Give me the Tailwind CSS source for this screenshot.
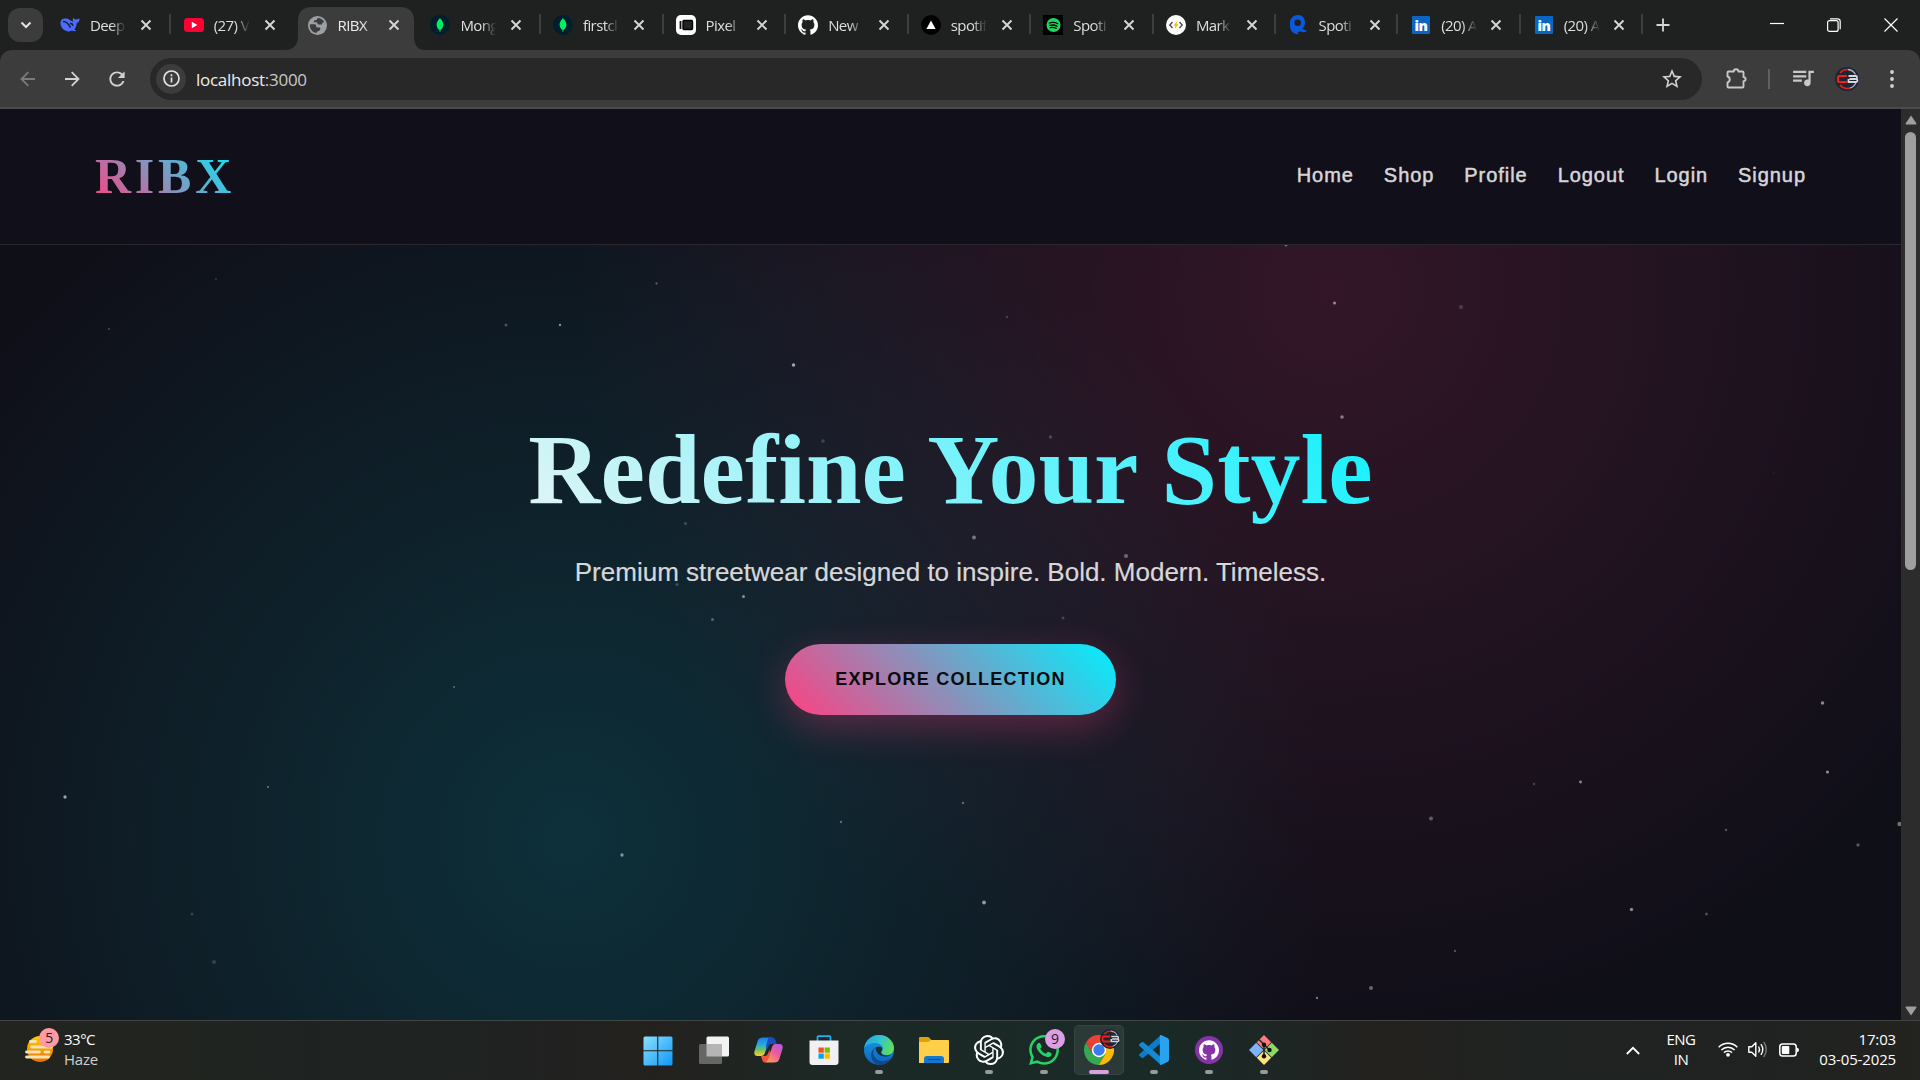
<!DOCTYPE html>
<html lang="en">
<head>
<meta charset="utf-8">
<title>RIBX</title>
<script src="https://cdn.jsdelivr.net/npm/@tailwindcss/browser@4"></script>
</head>
<body class="w-[1920px] h-[1080px] overflow-hidden flex flex-col bg-[#1f2121] font-['Open_Sans','Noto_Sans',sans-serif] text-[#dedede]">

<svg class="hidden">
  <symbol id="x" viewBox="0 0 12 12"><path d="M1.500 1.500l9 9M10.500 1.500l-9 9" stroke="#d6d6d6" stroke-width="1.900" fill="none"/></symbol>
  <symbol id="mongo" viewBox="0 0 20 20"><circle cx="10" cy="10" r="10" fill="#001e2b"/><path d="M10 3c.8 1.500 3.400 3.200 3.400 6.700 0 2.600-1.500 4.300-2.900 5.300l-.2 2h-.6l-.2-2C8.100 14 6.600 12.300 6.600 9.700 6.600 6.200 9.200 4.500 10 3z" fill="#00ed64"/></symbol>
  <symbol id="linkedin" viewBox="0 0 20 20"><rect x="1" y="1" width="18" height="18" rx="1" fill="#0a66c2"/><text x="3.400" y="15.500" font-family="Open Sans" font-weight="800" font-size="14" textLength="13" fill="#fff">in</text></symbol>
  <symbol id="github" viewBox="0 0 24 24"><path d="M12 .297c-6.630 0-12 5.373-12 12 0 5.303 3.438 9.800 8.205 11.385.6.113.82-.258.82-.577 0-.285-.01-1.040-.015-2.040-3.338.724-4.042-1.610-4.042-1.610C4.422 18.070 3.633 17.700 3.633 17.700c-1.087-.744.084-.729.084-.729 1.205.084 1.838 1.236 1.838 1.236 1.070 1.835 2.809 1.305 3.495.998.108-.776.417-1.305.76-1.605-2.665-.3-5.466-1.332-5.466-5.930 0-1.310.465-2.380 1.235-3.220-.135-.303-.54-1.523.105-3.176 0 0 1.005-.322 3.300 1.230.96-.267 1.980-.399 3-.405 1.020.006 2.040.138 3 .405 2.280-1.552 3.285-1.230 3.285-1.230.645 1.653.24 2.873.12 3.176.765.840 1.230 1.910 1.230 3.220 0 4.610-2.805 5.625-5.475 5.920.42.360.81 1.096.81 2.220 0 1.606-.015 2.896-.015 3.286 0 .315.21.690.825.570C20.565 22.092 24 17.592 24 12.297c0-6.627-5.373-12-12-12"/></symbol>
  <symbol id="cb" viewBox="0 0 24 24"><circle cx="12" cy="12" r="12" fill="#1c2536"/><path d="M16 3.500A9.500 9.500 0 0 0 5 6M5 18a9.500 9.500 0 0 0 10 3" stroke="#e02414" stroke-width="1.600" fill="none"/><path d="M13 2.500a9.500 9.500 0 0 1 7.500 5M21 15.500a9.500 9.500 0 0 1-6 5.600" stroke="#aab0b8" stroke-width="1.300" fill="none"/><path d="M12 9H4.500Q3 9 3 10.500v3Q3 15 4.500 15H12" stroke="#f0200f" stroke-width="2.200" fill="none"/><path d="M13.500 9H21q1 0 1 1.500t-1 1.500h-6.500M21 12q1.500 0 1.500 1.500T21 15h-7.500V12" stroke="#d5d8dc" stroke-width="1.800" fill="none"/></symbol>
</svg>

<!-- Tab strip -->
<div class="h-[50px] shrink-0 flex items-center bg-[#1f2121] text-[15px] tracking-[-0.6px]">
  <div class="ml-2 w-[35px] h-[34px] rounded-[12px] bg-[#3c3c3c] flex items-center justify-center"><svg class="w-3 h-2" viewBox="0 0 12 8"><path d="M1.500 1.500L6 6l4.500-4.500" stroke="#e3e3e3" stroke-width="2" fill="none"/></svg></div>
  <div class="ml-[5px] flex h-full">
    <div class="relative w-[123.800px] flex items-center pl-3"><svg class="w-5 h-5 shrink-0" viewBox="0 0 20 20"><path d="M.5 8C.5 4.500 3 3.300 5.500 3.500c2-.3 3.300.6 4.500 1.700 1.200.3 2.200 1.400 3.200 1.600-.6-1.300-.7-2.500.2-4.300.5 1.400 1.500 1.900 2.600 2 1.200-.7 2.300-.6 3.500-1.300.2 2.600-.8 4.300-2.800 4.900-.1 3-1.200 5-2.400 6.300l2 1.400c-1.300.8-3.100.5-4.200-.2-1.300.8-3.300 1.100-5 .6C3.100 15.200.5 12 .5 8z" fill="#4d6bfe"/><path d="M3 6.500c3.200-.2 6 3 7.500 6.300M10 8.500c1.600-.2 2.800.8 3 2.300" stroke="#1f2121" stroke-width="1.400" fill="none"/></svg><span class="ml-[10px] w-[36px] whitespace-nowrap [mask-image:linear-gradient(90deg,#000_60%,transparent)]">Deep</span><svg class="ml-[14px] w-3 h-3 shrink-0"><use href="#x"/></svg><i class="absolute right-px top-[14px] w-[2px] h-5 bg-[#3d3e3e]"></i></div>
    <div class="relative w-[122.800px] flex items-center pl-3"><svg class="w-5 h-5 shrink-0" viewBox="0 0 20 20"><rect x="0" y="3" width="20" height="14" rx="3.500" fill="#ff0033"/><path d="M7.800 6.800v6.400L13.300 10z" fill="#fff"/></svg><span class="ml-[10px] w-[36px] whitespace-nowrap [mask-image:linear-gradient(90deg,#000_60%,transparent)]">(27) V</span><svg class="ml-[14px] w-3 h-3 shrink-0"><use href="#x"/></svg></div>
    <div class="relative w-[123.800px] flex items-center pl-[13px]">
      <svg class="absolute left-[-11px] top-[7px] w-[141px] h-[43px]" viewBox="0 0 141 43"><path d="M0 43Q14 43 14 29V14Q14 0 28 0H116Q130 0 130 14V29Q130 43 141 43Z" fill="#3c3c3c"/></svg>
      <svg class="relative w-[19px] h-[19px] shrink-0" viewBox="2 2 20 20" fill="#9aa0a6"><circle cx="12" cy="12" r="10"/><path fill="#3c3c3c" d="M11 19.930c-3.950-.49-7-3.850-7-7.930 0-.4 0-.8.100-1.200h4.400c1.500 0 2 .6 2 1.700 0 1.200.7 1.500 2 1.500h1.500c.6 0 1 .6 1 1.200 0 1.500-1 2.800-2.500 2.800-1 0-1.500.8-1.500 1.930zM8 8.500c0-1.300 1-2.200 2.500-2.200.8 0 1-.6 1-1.200 0-.5.300-1 .8-1.100 3 .1 5.700 1.900 7 4.600-1.200-.2-2.300.2-2.300 1.200 0 .9-.7 1.200-1.500 1.200h-2c-1.200 0-1.500-.7-1.500-1.500 0-.6-.4-1-1-1z"/></svg><span class="relative ml-[11px] w-[35px] whitespace-nowrap text-[#ececec] [mask-image:linear-gradient(90deg,#000_75%,transparent)]">RIBX</span><svg class="relative ml-[15px] w-3 h-3 shrink-0"><use href="#x"/></svg></div>
    <div class="relative w-[122.600px] flex items-center pl-3"><svg class="w-5 h-5 shrink-0"><use href="#mongo"/></svg><span class="ml-[10px] w-[36px] whitespace-nowrap [mask-image:linear-gradient(90deg,#000_60%,transparent)]">Mong</span><svg class="ml-[14px] w-3 h-3 shrink-0"><use href="#x"/></svg><i class="absolute right-0 top-[14px] w-[2px] h-5 bg-[#3d3e3e]"></i></div>
    <div class="relative w-[122.600px] flex items-center pl-3"><svg class="w-5 h-5 shrink-0"><use href="#mongo"/></svg><span class="ml-[10px] w-[36px] whitespace-nowrap [mask-image:linear-gradient(90deg,#000_60%,transparent)]">firstcl</span><svg class="ml-[14px] w-3 h-3 shrink-0"><use href="#x"/></svg><i class="absolute right-0 top-[14px] w-[2px] h-5 bg-[#3d3e3e]"></i></div>
    <div class="relative w-[122.600px] flex items-center pl-3"><svg class="w-5 h-5 shrink-0" viewBox="0 0 20 20"><rect width="20" height="20" rx="5" fill="#fff"/><path d="M4.500 6v8" stroke="#111" stroke-width="1.800"/><rect x="7" y="5.500" width="9.500" height="9" rx="1" fill="#222" stroke="#000" stroke-width="1.400"/></svg><span class="ml-[10px] w-[36px] whitespace-nowrap [mask-image:linear-gradient(90deg,#000_60%,transparent)]">Pixel</span><svg class="ml-[14px] w-3 h-3 shrink-0"><use href="#x"/></svg><i class="absolute right-0 top-[14px] w-[2px] h-5 bg-[#3d3e3e]"></i></div>
    <div class="relative w-[122.600px] flex items-center pl-3"><svg class="w-5 h-5 shrink-0 fill-white"><use href="#github"/></svg><span class="ml-[10px] w-[36px] whitespace-nowrap [mask-image:linear-gradient(90deg,#000_60%,transparent)]">New</span><svg class="ml-[14px] w-3 h-3 shrink-0"><use href="#x"/></svg><i class="absolute right-0 top-[14px] w-[2px] h-5 bg-[#3d3e3e]"></i></div>
    <div class="relative w-[122.600px] flex items-center pl-3"><svg class="w-5 h-5 shrink-0" viewBox="0 0 20 20"><circle cx="10" cy="10" r="10" fill="#000"/><path d="M10 5.500l4.600 8.500H5.400z" fill="#fff"/></svg><span class="ml-[10px] w-[36px] whitespace-nowrap [mask-image:linear-gradient(90deg,#000_60%,transparent)]">spotif</span><svg class="ml-[14px] w-3 h-3 shrink-0"><use href="#x"/></svg><i class="absolute right-0 top-[14px] w-[2px] h-5 bg-[#3d3e3e]"></i></div>
    <div class="relative w-[122.600px] flex items-center pl-3"><svg class="w-5 h-5 shrink-0" viewBox="0 0 20 20"><rect width="20" height="20" fill="#000"/><circle cx="10.500" cy="10" r="7" fill="#1ed760"/><path d="M6.300 8q4.500-1.400 8.500.8M6.800 10.400q3.800-1.100 7.200.8M7.200 12.600q3.200-.8 6 .8" stroke="#000" stroke-width="1.300" fill="none" stroke-linecap="round"/></svg><span class="ml-[10px] w-[36px] whitespace-nowrap [mask-image:linear-gradient(90deg,#000_60%,transparent)]">Spoti</span><svg class="ml-[14px] w-3 h-3 shrink-0"><use href="#x"/></svg><i class="absolute right-0 top-[14px] w-[2px] h-5 bg-[#3d3e3e]"></i></div>
    <div class="relative w-[122.600px] flex items-center pl-3"><svg class="w-5 h-5 shrink-0" viewBox="0 0 20 20"><circle cx="10" cy="10" r="10" fill="#fff"/><path d="M6.500 7L3.800 10l2.700 3M13.500 7l2.700 3-2.700 3" stroke="#444" stroke-width="1.300" fill="none"/><path d="M11.300 6l-3.800 4.700h2L8.700 14l3.800-4.700h-2z" fill="#f7b500"/></svg><span class="ml-[10px] w-[36px] whitespace-nowrap [mask-image:linear-gradient(90deg,#000_60%,transparent)]">Mark</span><svg class="ml-[14px] w-3 h-3 shrink-0"><use href="#x"/></svg><i class="absolute right-px top-[14px] w-[2px] h-5 bg-[#3d3e3e]"></i></div>
    <div class="relative w-[122.600px] flex items-center pl-3"><svg class="w-5 h-5 shrink-0" viewBox="0 0 20 20"><path fill-rule="evenodd" d="M9 0c4.500 0 7 3.400 7 7.600 0 2.600-1 4.600-2.600 6 1.400 1.600 2.800 1.900 4.600 1.700-1 2-3 2.300-4.600 1.600-2-.8-3.400-.2-4.800 0 .3.900.7 1.600 1.200 2.300C4.800 19.500 1 16 1 11V8C1 3.400 4.500 0 9 0zm-.3 4.500a3.300 3.300 0 1 0 0 6.600 3.300 3.300 0 0 0 0-6.600z" fill="#0a57e0"/></svg><span class="ml-[10px] w-[36px] whitespace-nowrap [mask-image:linear-gradient(90deg,#000_60%,transparent)]">Spoti</span><svg class="ml-[14px] w-3 h-3 shrink-0"><use href="#x"/></svg><i class="absolute right-px top-[14px] w-[2px] h-5 bg-[#3d3e3e]"></i></div>
    <div class="relative w-[122.600px] flex items-center pl-3"><svg class="w-5 h-5 shrink-0"><use href="#linkedin"/></svg><span class="ml-[10px] w-[36px] whitespace-nowrap [mask-image:linear-gradient(90deg,#000_60%,transparent)]">(20) A</span><svg class="ml-[13px] w-3 h-3 shrink-0"><use href="#x"/></svg><i class="absolute right-px top-[14px] w-[2px] h-5 bg-[#3d3e3e]"></i></div>
    <div class="relative w-[122.600px] flex items-center pl-3"><svg class="w-5 h-5 shrink-0"><use href="#linkedin"/></svg><span class="ml-[10px] w-[36px] whitespace-nowrap [mask-image:linear-gradient(90deg,#000_60%,transparent)]">(20) A</span><svg class="ml-[13px] w-3 h-3 shrink-0"><use href="#x"/></svg><i class="absolute right-px top-[14px] w-[2px] h-5 bg-[#3d3e3e]"></i></div>
  </div>
  <svg class="ml-3 w-[14px] h-[14px]" viewBox="0 0 14 14"><path d="M7 .5v13M.5 7h13" stroke="#d6d6d6" stroke-width="1.800"/></svg>
  <div class="ml-auto mr-[22px] flex items-center gap-[43px]">
    <svg class="w-[14px] h-[14px]" viewBox="0 0 14 14"><path d="M0 5.500h14" stroke="#fff" stroke-width="1.200"/></svg>
    <svg class="w-[14px] h-[14px]" viewBox="0 0 14 14"><rect x=".6" y="2.600" width="10.500" height="10.800" rx="2" stroke="#fff" stroke-width="1.200" fill="none"/><path d="M3 .8h7.500q2.700 0 2.700 2.700v7.800" stroke="#fff" stroke-width="1.200" fill="none"/></svg>
    <svg class="w-[14px] h-[14px]" viewBox="0 0 14 14"><path d="M.5.5l13 13M13.500.5l-13 13" stroke="#fff" stroke-width="1.200"/></svg>
  </div>
</div>

<!-- Toolbar -->
<div class="h-[59px] shrink-0 flex items-center bg-[#3c3c3c] rounded-t-[12px] border-b-2 border-[#4a4b4a]">
  <svg class="ml-[20px] w-[15px] h-[16px]" viewBox="0 0 15 16"><path d="M15 8H1.500M8.300 1.200L1.500 8l6.800 6.800" stroke="#7b7b7b" stroke-width="1.800" fill="none"/></svg>
  <svg class="ml-[30px] w-[15px] h-[16px]" viewBox="0 0 15 16"><path d="M0 8h13.500M6.700 1.200L13.500 8l-6.800 6.800" stroke="#d2d2d2" stroke-width="1.800" fill="none"/></svg>
  <svg class="ml-[27px] w-[20px] h-[20px]" viewBox="1.500 2 21 20" fill="#d2d2d2"><path d="M17.650 6.350C16.200 4.900 14.210 4 12 4c-4.420 0-7.990 3.580-7.990 8s3.570 8 7.990 8c3.730 0 6.840-2.550 7.730-6h-2.080c-.82 2.330-3.040 4-5.650 4-3.310 0-6-2.690-6-6s2.690-6 6-6c1.660 0 3.140.69 4.220 1.780L13 11h7V4l-2.350 2.350z"/></svg>
  <div class="ml-[23px] w-[1552px] h-[42px] rounded-full bg-[#282828] flex items-center pl-[6px] pr-[19px]">
    <div class="w-[30px] h-[30px] rounded-full bg-[#3c3c3c] flex items-center justify-center"><svg class="w-[17px] h-[17px]" viewBox="0 0 17 17"><circle cx="8.500" cy="8.500" r="7.500" stroke="#e3e3e3" stroke-width="1.700" fill="none"/><path d="M8.500 7.500v5M8.500 4.300v1.900" stroke="#e3e3e3" stroke-width="1.700"/></svg></div>
    <span class="ml-[10px] pt-[2px] text-[17px] tracking-[-0.27px] text-[#ececec]">localhost<span class="text-[#c9c9c9]">:3000</span></span>
    <svg class="ml-auto w-[22px] h-[22px]" viewBox="1 1 22 22" fill="#d2d2d2"><path d="M22 9.240l-7.190-.62L12 2 9.190 8.630 2 9.240l5.460 4.730L5.820 21 12 17.270 18.180 21l-1.630-7.030L22 9.240zM12 15.400l-3.760 2.270 1-4.280-3.320-2.880 4.380-.38L12 6.100l1.710 4.040 4.380.38-3.320 2.880 1 4.280L12 15.400z"/></svg>
  </div>
  <svg class="ml-[23px] w-[23px] h-[23px]" viewBox="0 0 23 23"><path d="M3.500 4.500h5.300a2.300 2.300 0 0 1 4.600 0h4.100q1 0 1 1v4.600a2 2 0 0 1 0 4.200v5.200q0 1-1 1H3.500q-1 0-1-1v-4.200a3 3 0 0 0 0-5.800V5.500q0-1 1-1z" stroke="#c8c8c8" stroke-width="1.900" fill="none" stroke-linejoin="round"/></svg>
  <i class="ml-[20px] w-[2px] h-5 bg-[#606060]"></i>
  <svg class="ml-[22px] w-[23px] h-[23px]" viewBox="2 3 21 20" fill="#c8c8c8"><path d="M15 6H3v2h12V6zm0 4H3v2h12v-2zM3 16h8v-2H3v2zM17 6v8.180c-.31-.11-.65-.18-1-.18-1.660 0-3 1.340-3 3s1.340 3 3 3 3-1.340 3-3V8h3V6h-5z"/></svg>
  <svg class="ml-[20px] w-6 h-6"><use href="#cb"/></svg>
  <svg class="ml-[31px] w-1 h-[18px]" viewBox="0 0 4 18" fill="#d2d2d2"><circle cx="2" cy="2" r="1.900"/><circle cx="2" cy="9" r="1.900"/><circle cx="2" cy="16" r="1.900"/></svg>
</div>

<!-- Page -->
<div class="h-[911px] shrink-0 flex">
  <div class="relative w-[1901px] h-full bg-[#0f0f18] bg-[radial-gradient(circle_at_70%_20%,rgba(255,64,129,0.15)_0%,transparent_50%),radial-gradient(circle_at_30%_80%,rgba(0,240,255,0.15)_0%,transparent_50%)] font-['Liberation_Sans',Arial,sans-serif]">
    <svg id="stars" class="absolute inset-0 w-full h-full" viewBox="0 109 1901 911"></svg>
    <nav class="relative h-[136px] bg-[#110f19] border-b border-[#292831] px-[95px] flex items-center justify-between">
      <div class="mb-[2px] font-['Liberation_Serif','Times_New_Roman',serif] font-bold text-[50px] leading-[58px] tracking-[3.750px] bg-[linear-gradient(45deg,#ff4081,#00f0ff)] bg-clip-text text-transparent">RIBX</div>
      <div class="mb-[3px] flex gap-[30px] text-[20px] tracking-[0.940px] text-[#d6d6d9] font-medium [-webkit-text-stroke:0.5px_#d6d6d9]">
        <a>Home</a><a>Shop</a><a>Profile</a><a>Logout</a><a>Login</a><a>Signup</a>
      </div>
    </nav>
    <main class="relative pt-[165px] flex flex-col items-center">
      <h1 class="w-[1000px] text-center font-['Liberation_Serif','Times_New_Roman',serif] font-bold text-[100px] leading-[120px] bg-[linear-gradient(45deg,#f5f5f5,#00f0ff)] bg-clip-text text-transparent">Redefine Your Style</h1>
      <p class="mt-[21px] text-[26px] leading-[42px] text-[#d7d7d9] [-webkit-text-stroke:0.2px_#d7d7d9]">Premium streetwear designed to inspire. Bold. Modern. Timeless.</p>
      <button class="mt-[51px] w-[331px] h-[71px] rounded-full bg-[linear-gradient(45deg,#ff4081,#00f0ff)] shadow-[0_12px_38px_rgba(255,64,129,0.3)] text-[18px] font-bold tracking-[1.250px] text-[#0a0a0f]">EXPLORE COLLECTION</button>
    </main>
  </div>
  <div class="w-[19px] h-full bg-[#2c2c2c] flex flex-col items-center">
    <svg class="mt-[6px] w-3 h-[10px] shrink-0" viewBox="0 0 12 10"><path d="M6 .5l5.500 8q0 1-1 1h-9q-1 0-1-1z" fill="#9f9f9f"/></svg>
    <div class="mt-[7px] w-[11px] h-[438px] rounded-full bg-[#9f9f9f]"></div>
    <svg class="mt-auto mb-[4px] w-3 h-[10px] shrink-0" viewBox="0 0 12 10"><path d="M6 9.500l5.500-8q0-1-1-1h-9q-1 0-1 1z" fill="#9f9f9f"/></svg>
  </div>
</div>

<!-- Taskbar -->
<div class="relative h-[60px] shrink-0 border-t border-[#434544] bg-[linear-gradient(90deg,#22241f_0%,#22251f_8%,#1e2322_16%,#1f2221_26%,#23211e_34%,#1c2926_44%,#192a27_60%,#1e2624_67%,#23211e_72%,#1f2321_80%,#1f2221_92%,#23231f_100%)]">
  <div class="absolute left-[25px] top-[4px] flex text-[15px] leading-5 tracking-[-0.5px] text-white">
    <svg class="mt-[10px] w-[28px] h-[28px]" viewBox="0 0 28 28"><defs><linearGradient id="sun" x1="0" y1="0" x2="0" y2="1"><stop offset="0" stop-color="#ffd000"/><stop offset="1" stop-color="#f06a00"/></linearGradient></defs><circle cx="15" cy="14" r="13" fill="url(#sun)"/><path d="M5.500 6.500h5M6.500 12h20M1.500 17h13M20 17h4M1.500 22h22" stroke="#f6e3b0" stroke-width="2.800" stroke-linecap="round"/></svg>
    <div class="absolute left-[14px] top-[3px] w-5 h-5 rounded-full bg-[#ff99a4] text-[#222] text-center leading-5 text-[14px]">5</div>
    <div class="ml-[11px] pt-[4px]"><div>33°C</div><div class="text-[#d0d0d0] tracking-[-0.2px]">Haze</div></div>
  </div>

  <div class="absolute left-[631px] top-0 h-full flex">
    <div class="w-[55px] pt-[15px] flex justify-center -ml-px"><svg class="w-[30px] h-[30px]" viewBox="0 0 30 30"><defs><linearGradient id="win" x1="0" y1="0" x2="1" y2="1"><stop offset="0" stop-color="#8ae0ff"/><stop offset="1" stop-color="#0f97f5"/></linearGradient></defs><path d="M2 .5h12.200v13.700H.5V2Q.5.5 2 .5zM15.300.5H28q1.500 0 1.500 1.500v12.200H15.300zM.5 15.300h13.700v14.200H2q-1.500 0-1.500-1.500zM15.300 15.300h14.200V28q0 1.500-1.500 1.500H15.300z" fill="url(#win)"/></svg></div>
    <div class="w-[55px] ml-px pt-[15px] flex justify-center"><svg class="w-[30px] h-[30px]" viewBox="0 0 30 30"><rect x="7.500" y=".5" width="22.500" height="20" rx="1.500" fill="#f2f2f2"/><rect x="0" y="8" width="23" height="20" rx="1.500" fill="#666"/><rect x="7.500" y="8" width="15.500" height="12.500" fill="#b4b4b4"/></svg></div>
    <div class="w-[55px] pt-[16px] flex justify-center"><svg class="w-[29px] h-[26px]" viewBox="0 0 29 26"><defs><linearGradient id="c1" x1="0" y1="0" x2="0" y2="1"><stop offset="0" stop-color="#1d7fe0"/><stop offset=".35" stop-color="#21a6e6"/><stop offset=".65" stop-color="#6cc06a"/><stop offset="1" stop-color="#ffd21c"/></linearGradient><linearGradient id="c2" x1="1" y1="0" x2=".2" y2="1"><stop offset="0" stop-color="#a85bf0"/><stop offset=".5" stop-color="#ee5a9c"/><stop offset="1" stop-color="#ffa154"/></linearGradient></defs><path d="M4 3Q5.200.5 8.500.5H18l-3 4-4.500 12.500q-.9 2-3 2H3.500Q-.3 19 .4 14.500z" fill="url(#c1)"/><path d="M14.500.5H18.500q2.300 0 3 2.500l1.200 4H17.500q-2 0-3 2l-2 5-.5-5z" fill="#1a4cc0"/><path d="M25 23Q23.800 25.500 20.500 25.500H11l3-4L18.500 9q.9-2 3-2h4q3.800 0 3.100 4.500z" fill="url(#c2)"/><path d="M7 19h3.500q2.500 0 3.500-2.500l1.500-4 .5 5-3 7-2 1Q9 25.500 8.300 23z" fill="#f0563c"/></svg></div>
    <div class="w-[55px] pt-[14px] flex justify-center"><svg class="w-[30px] h-[30px]" viewBox="0 0 30 30"><path d="M8.500 7V2.200q0-1 1-1h11q1 0 1 1V7" stroke="#1eb0f0" stroke-width="1.800" fill="none"/><path d="M.5 5.500h29V27q0 3-3 3h-23q-3 0-3-3z" fill="#f1f1f1"/><path d="M9.500 12.500h5.300v5.200H9.500z" fill="#f25022"/><path d="M15.600 12.500h5.300v5.200h-5.300z" fill="#7fba00"/><path d="M9.500 18.500h5.300v5.200H9.500z" fill="#00a4ef"/><path d="M15.600 18.500h5.300v5.200h-5.300z" fill="#ffb900"/></svg></div>
    <div class="w-[55px] pt-[14px] flex flex-col items-center"><svg class="w-[30px] h-[30px] shrink-0" viewBox="0 0 30 30"><defs><linearGradient id="e1" x1="0" y1=".2" x2="1" y2=".5"><stop offset="0" stop-color="#1fa4e4"/><stop offset=".55" stop-color="#35c6c8"/><stop offset="1" stop-color="#62de52"/></linearGradient><linearGradient id="e2" x1="0" y1="0" x2="0" y2="1"><stop offset="0" stop-color="#1b9de2"/><stop offset="1" stop-color="#0c62bd"/></linearGradient></defs><circle cx="15" cy="15" r="15" fill="url(#e2)"/><path d="M.2 13C1.200 5.500 7.500 0 15 0c8.500 0 15 6.200 15 13 0 4.500-3.300 7-7.300 7-3.200 0-5.400-1.300-5.400-2.500 0-1 1.400-1.500 1.400-4 0-3-3-5.500-7.700-5.500C6 8 1.800 10.500.2 13z" fill="url(#e1)"/><path d="M11.500 12.500c-3 2.500-3 7.500.5 11 4 4 10 3.500 15.800-.7C25.500 27 20.700 30 15.500 30 10 29 7.200 24.500 7.200 20c0-3.500 1.800-6.300 4.300-7.500z" fill="#114a8b"/><path d="M11.500 12.500c1.500-1 5-1.300 6.800.2.200 2.600-1.200 3.500-1.200 4.800 0 2.500 5.400 4 9.700 2.200-5 4-15.300 1-15.300-7.200z" fill="#172f33"/></svg><i class="mt-[5px] w-2 h-1 rounded-full bg-[#969b9a]"></i></div>
    <div class="w-[55px] pt-[15px] flex justify-center"><svg class="w-[30px] h-[28px]" viewBox="0 0 30 28"><path d="M0 2q0-1 1-1h8.500l3.500 3.500h5V10H0z" fill="#e0a008"/><path d="M0 6h9l3-2h17q1 0 1 1v21q0 1-1 1H0z" fill="#ffcf48"/><path d="M5 27v-4q0-3 3-3h14q3 0 3 3v4z" fill="#1478d0"/><path d="M8.500 23.500h13" stroke="#0c4f96" stroke-width="1.200"/></svg></div>
    <div class="w-[55px] pt-[14px] flex flex-col items-center"><svg class="w-[30px] h-[30px] shrink-0 fill-white" viewBox="0 0 24 24"><path d="M22.282 9.821a5.985 5.985 0 0 0-.516-4.911 6.046 6.046 0 0 0-6.510-2.900A6.065 6.065 0 0 0 4.981 4.182a5.985 5.985 0 0 0-3.998 2.900 6.046 6.046 0 0 0 .743 7.097 5.980 5.980 0 0 0 .511 4.911 6.051 6.051 0 0 0 6.515 2.900A5.985 5.985 0 0 0 13.260 24a6.056 6.056 0 0 0 5.772-4.206 5.989 5.989 0 0 0 3.998-2.900 6.056 6.056 0 0 0-.748-7.073zm-9.022 12.608a4.476 4.476 0 0 1-2.876-1.041l.142-.080 4.778-2.758a.795.795 0 0 0 .393-.681v-6.737l2.020 1.169a.071.071 0 0 1 .038.052v5.583a4.504 4.504 0 0 1-4.495 4.494zm-9.661-4.125a4.471 4.471 0 0 1-.535-3.014l.142.085 4.783 2.758a.771.771 0 0 0 .781 0l5.843-3.369v2.332a.080.080 0 0 1-.033.062L9.740 19.950a4.499 4.499 0 0 1-6.141-1.646zM2.341 7.896a4.485 4.485 0 0 1 2.366-1.973V11.600a.766.766 0 0 0 .388.677l5.814 3.354-2.020 1.169a.076.076 0 0 1-.071 0l-4.830-2.787A4.504 4.504 0 0 1 2.341 7.872zm16.596 3.856L13.104 8.364 15.119 7.200a.076.076 0 0 1 .071 0l4.830 2.791a4.494 4.494 0 0 1-.677 8.104v-5.677a.790.790 0 0 0-.407-.667zm2.011-3.023l-.142-.085-4.774-2.782a.776.776 0 0 0-.785 0L9.409 9.230V6.897a.066.066 0 0 1 .028-.062l4.830-2.787a4.499 4.499 0 0 1 6.680 4.660zM8.307 12.863l-2.020-1.164a.080.080 0 0 1-.038-.057V6.074a4.499 4.499 0 0 1 7.376-3.454l-.142.081L8.704 5.459a.795.795 0 0 0-.393.681zm1.098-2.365l2.602-1.500 2.607 1.500v2.999l-2.597 1.500-2.607-1.500Z"/></svg><i class="mt-[5px] w-2 h-1 rounded-full bg-[#969b9a]"></i></div>
    <div class="relative w-[55px] pt-[14px] flex flex-col items-center"><svg class="w-[30px] h-[30px] shrink-0 fill-[#25d366]" viewBox="0 0 24 24"><path d="M17.472 14.382c-.297-.149-1.758-.867-2.030-.967-.273-.099-.471-.148-.670.150-.197.297-.767.966-.940 1.164-.173.199-.347.223-.644.075-.297-.150-1.255-.463-2.390-1.475-.883-.788-1.480-1.761-1.653-2.059-.173-.297-.018-.458.130-.606.134-.133.298-.347.446-.520.149-.174.198-.298.298-.497.099-.198.050-.371-.025-.520-.075-.149-.669-1.612-.916-2.207-.242-.579-.487-.5-.669-.510-.173-.008-.371-.010-.570-.010-.198 0-.520.074-.792.372-.272.297-1.040 1.016-1.040 2.479 0 1.462 1.065 2.875 1.213 3.074.149.198 2.096 3.200 5.077 4.487.709.306 1.262.489 1.694.625.712.227 1.360.195 1.871.118.571-.085 1.758-.719 2.006-1.413.248-.694.248-1.289.173-1.413-.074-.124-.272-.198-.570-.347m-5.421 7.403h-.004a9.870 9.870 0 0 1-5.031-1.378l-.361-.214-3.741.982.998-3.648-.235-.374a9.860 9.860 0 0 1-1.510-5.260c.001-5.450 4.436-9.884 9.888-9.884 2.640 0 5.122 1.030 6.988 2.898a9.825 9.825 0 0 1 2.893 6.994c-.003 5.450-4.437 9.884-9.885 9.884m8.413-18.297A11.815 11.815 0 0 0 12.050 0C5.495 0 .160 5.335.157 11.892c0 2.096.547 4.142 1.588 5.945L.057 24l6.305-1.654a11.882 11.882 0 0 0 5.683 1.448h.005c6.554 0 11.890-5.335 11.893-11.893a11.821 11.821 0 0 0-3.480-8.413Z"/></svg><i class="mt-[5px] w-2 h-1 rounded-full bg-[#969b9a]"></i><b class="absolute left-[29px] top-[8px] w-5 h-5 rounded-full bg-[#dc9fe4] text-[#222] text-[14px] leading-5 text-center font-normal">9</b></div>
    <div class="relative w-[55px] flex flex-col items-center"><div class="mt-[4px] w-[50px] h-[50px] rounded-[5px] bg-white/8 border border-white/5 flex flex-col items-center pt-[9px]"><svg class="w-[30px] h-[30px] shrink-0" viewBox="0 0 30 30"><path d="M2 7.500A15 15 0 0 1 28 7.500H15v5z" fill="#ea4335"/><path d="M2 7.500A15 15 0 0 0 14.800 30l6.700-11.300L8.500 18.700z" fill="#34a853"/><path d="M28 7.500A15 15 0 0 1 14.800 30l6.700-11.300L15 7.500z" fill="#fbbc04"/><path d="M2 7.500L8.500 19l6-7z" fill="#ea4335"/><circle cx="15" cy="15" r="7.200" fill="#fff"/><circle cx="15" cy="15" r="5.700" fill="#3a7cf0"/></svg><i class="mt-[5px] w-5 h-1 rounded-full bg-[#dc9fe4] shrink-0"></i></div><svg class="absolute left-[29px] top-[8px] w-5 h-5"><use href="#cb"/></svg></div>
    <div class="w-[55px] pt-[14px] flex flex-col items-center"><svg class="w-[30px] h-[30px] shrink-0" viewBox="0 0 30 30"><path d="M22 0v8L4.500 22.800q-.9.600-1.800 0L.5 21q-1-1 0-2z" fill="#0c7bc8"/><path d="M22 30v-8L4.500 7.200q-.9-.6-1.800 0L.5 9q-1 1 0 2z" fill="#1489d6"/><path d="M22 0l6.500 3q1.500.8 1.500 2.200v19.600q0 1.400-1.500 2.200L22 30q-1.200.2-1.200-1.500V1.500Q20.800-.2 22 0z" fill="#29a3f0"/></svg><i class="mt-[5px] w-2 h-1 rounded-full bg-[#969b9a]"></i></div>
    <div class="w-[55px] pt-[14px] flex flex-col items-center"><svg class="w-[30px] h-[30px] shrink-0" viewBox="0 0 30 30"><circle cx="15" cy="15" r="14" fill="#8534a8"/><use href="#github" x="5" y="5" width="20" height="20" fill="#fff"/></svg><i class="mt-[5px] w-2 h-1 rounded-full bg-[#969b9a]"></i></div>
    <div class="w-[55px] pt-[14px] flex flex-col items-center"><svg class="w-[30px] h-[30px] shrink-0" viewBox="0 0 30 30"><path d="M15 0l7.200 7.200L15 14.400 7.800 7.200z" fill="#ff7b7b"/><path d="M22.800 7.800l7.200 7.200-7.200 7.200L15.600 15z" fill="#8fd868"/><path d="M7.200 7.800l7.200 7.200-7.200 7.200L0 15z" fill="#7fb2ff"/><path d="M15 15.600l7.200 7.200L15 30l-7.200-7.200z" fill="#ffe27a"/><path d="M10 4.500l5 5V22M15 9.500l5.500 5.500" stroke="#192a27" stroke-width="1.600" fill="none"/><circle cx="15" cy="9.700" r="2.200" fill="#111"/><circle cx="20.500" cy="15" r="2.200" fill="#111"/><circle cx="15" cy="21.300" r="2.200" fill="#111"/></svg><i class="mt-[5px] w-2 h-1 rounded-full bg-[#969b9a]"></i></div>
  </div>

  <div class="absolute right-[24px] top-0 h-full flex items-center text-[15px] leading-5 tracking-[-0.150px] text-white">
    <svg class="w-[14px] h-[9px]" viewBox="0 0 14 9"><path d="M.8 8L7 1.800 13.200 8" stroke="#fff" stroke-width="1.800" fill="none"/></svg>
    <div class="ml-[26px] mb-[3px] w-[30px] text-center tracking-[-0.5px]"><div>ENG</div><div>IN</div></div>
    <svg class="ml-[22px] mb-[2px] w-5 h-[15px]" viewBox="0 0 20 15"><g stroke="#fff" stroke-width="1.500" fill="none"><path d="M.7 5.200a13.200 13.200 0 0 1 18.600 0M3.400 8a9.300 9.300 0 0 1 13.200 0M6 10.600a5.700 5.700 0 0 1 8 0"/></g><circle cx="10" cy="12.800" r="1.900" fill="#fff"/></svg>
    <svg class="ml-[10px] mb-[2px] w-5 h-[17px]" viewBox="0 0 20 17"><g stroke="#fff" stroke-width="1.400" fill="none" stroke-linecap="round" stroke-linejoin="round"><path d="M.8 5.800h3l4-4v13.400l-4-4h-3z"/><path d="M10.800 6q1.500 2.500 0 5M13.200 3.700q3.300 4.800 0 9.600"/><path d="M16 1.500q4.500 7 0 14" stroke="#777"/></g></svg>
    <svg class="ml-[11px] mb-[2px] w-5 h-[14px]" viewBox="0 0 20 14"><rect x=".8" y=".9" width="16.400" height="12.200" rx="2.800" stroke="#fff" stroke-width="1.500" fill="none"/><rect x="2.800" y="3" width="7.500" height="8" rx="1" fill="#fff"/><path d="M18 4.700q2 .3 2 2.300t-2 2.300z" fill="#fff"/></svg>
    <div class="ml-[19px] mb-[4px] w-[78px] text-right whitespace-nowrap"><div>17:03</div><div>03-05-2025</div></div>
  </div>
</div>

<script>
// Faint particles over the hero: [x, y, diameter, opacity]
const stars = [[216,279,1.5,.3],[109,329,2,.25],[506,325,3,.25],[560,325,2.3,.55],[454,687,2,.35],[268,787,2,.4],[65,797,3.3,.6],[622,855,3.3,.5],[192,914,3,.16],[214,962,4,.16],
[1286,245,3,.35],[1334.500,303,3,.5],[1461,307,4.4,.15],[1342,417,3.500,.45],[1774,473,1,.2],[1822.500,703,3.500,.5],[1827.500,772,3,.55],[1534,784,2.500,.2],[1580.500,782,2.800,.5],[1431,818.500,4,.32],[1726,830,2.300,.32],[1899.500,824,4.400,.4],[1858,845,3.300,.3],[1631.500,909.500,3.400,.5],[1706.500,914,3,.25],[1455,951,2.300,.28],[1371,988,4,.36],[1317,998,2.300,.45],
[656.500,283.500,2.300,.3],[793.500,365,3.500,.6],[1007,317,2.500,.18],[823,441,3.500,.18],[1050.500,437,3.500,.2],[685.500,523.500,3,.2],[974,537.500,4,.4],[1126,556,4,.35],[677,584.500,3,.2],[743.500,596.500,3,.5],[712.500,619.500,3,.3],[1063,618,3,.2],[963,803,2.300,.35],[841,822,2.300,.35],[984,902.500,3.800,.55],[565,121,2,.06],[1216,110,2,.06]];
const svg = document.getElementById('stars');
for (const [x, y, d, o] of stars) {
  const c = document.createElementNS('http://www.w3.org/2000/svg', 'circle');
  c.setAttribute('cx', x); c.setAttribute('cy', y); c.setAttribute('r', d / 2);
  c.setAttribute('fill', '#fff'); c.setAttribute('fill-opacity', o);
  svg.appendChild(c);
}
</script>
</body>
</html>
